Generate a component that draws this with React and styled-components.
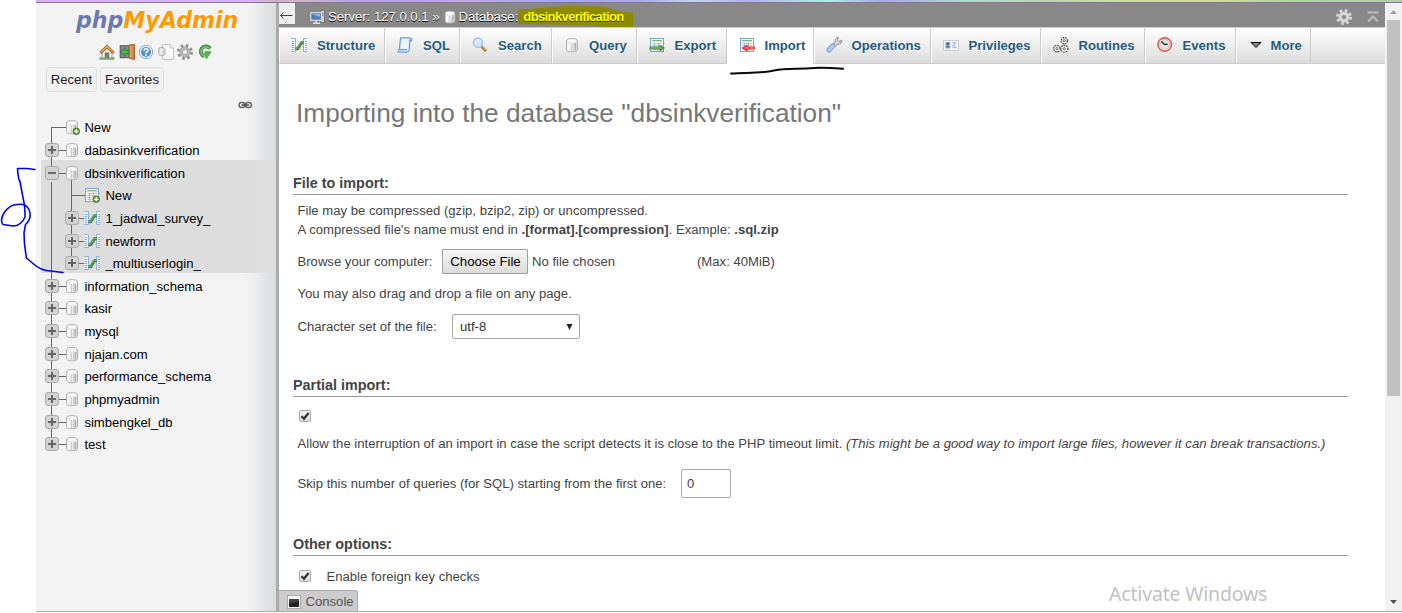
import React from "react";
import styled, { createGlobalStyle, css } from "styled-components";

const GlobalStyle = createGlobalStyle`
  * { box-sizing: border-box; }
  body { margin: 0; background: #fff; overflow: hidden; }
  body, button, input { font-family: "Liberation Sans", Arial, sans-serif; }
`;

/* ---------- icons: each one is drawn on a 16 x 16 grid ---------- */

const Db = () => (
  <g>
    <path d="M2.5 4 Q2.5 1.5 8 1.5 Q13.500 1.5 13.5 4 V12.5 Q13.5 14.8 8 14.8 Q2.5 14.8 2.5 12.5Z" fill="#ececec" stroke="#b2b2b2" />
    <path d="M4.5 6.5V13.2" stroke="#fff" strokeWidth="2" />
    <path d="M7.5 6.5V14M9.5 6.5V14" stroke="#cfcfcf" />
    <path d="M11.4 6V13.5" stroke="#b0b0b0" strokeWidth="1.8" />
    <ellipse cx="8" cy="4" rx="4.8" ry="2" fill="#fcfcfc" stroke="#d4d4d4" strokeWidth=".6" />
  </g>
);
const Plus = () => (
  <g>
    <circle cx="12.3" cy="12.3" r="3.2" fill="#73a846" stroke="#447821" />
    <path d="M12.3 10.3V14.3M10.3 12.3H14.3" stroke="#fff" strokeWidth="1.2" />
  </g>
);
const DbNew = () => (<g><Db /><Plus /></g>);
const Sheet = () => (
  <g>
    <rect x="1.5" y="1.5" width="13" height="13" fill="#fff" stroke="#7d9fd3" />
    <path d="M3 3.7H13" stroke="#83b777" strokeWidth="1.4" />
    <path d="M3 6.5H13M3 8.5H13M3 10.5H13M3 12.5H13" stroke="#b4c9e8" />
    <path d="M5.5 5.5V13.5M9.5 5.5V13.5" stroke="#8fb0dd" strokeWidth=".8" />
  </g>
);
const TableNew = () => (<g><Sheet /><Plus /></g>);
const Structure = () => (
  <g>
    <path d="M0 1.5H4.5V14.5H0Z" fill="#eef5ff" />
    <path d="M12 1.5H16V14.5H12Z" fill="#eef5ff" />
    <path d="M0 1.5H4.5V14.5H0M16 1.5H12.500V14.5H16" fill="none" stroke="#8fb1e0" />
    <path d="M.5 4.5H3M.5 6.5H3M.5 8.5H3M.5 10.5H3M.5 12.500H3M14 4.5H16M14 6.5H16M14 8.5H16M14 10.5H16M14 12.5H16" stroke="#86a9dc" />
    <path d="M4.5 11.8H6.8L10.4 5.7H12.8" fill="none" stroke="#397e3a" strokeWidth="2.9" strokeLinejoin="round" />
    <path d="M4.5 11.5H6.6L10.2 5.4H12.8" fill="none" stroke="#62a95a" strokeWidth="1.3" strokeLinejoin="round" />
  </g>
);
const Sql = () => (
  <g>
    <path d="M3.5 .8H13.5Q15.500 1 15 4H13L12.3 12.500Q12 15.200 10 15.200H1.500Q.2 13 2.3 12.500Z" fill="#cfe2fa" stroke="#5e8ed0" />
    <path d="M5 2.200H12L11 11.800H4Z" fill="#eaf4ff" />
    <path d="M2 12.7H10M13 1.5V4" stroke="#5e8ed0" />
  </g>
);
const Search = () => (
  <g>
    <path d="M9.500 9.500L13.2 13.2" stroke="#b57a3d" strokeWidth="3" strokeLinecap="round" />
    <path d="M10 9.300L13.5 12.800" stroke="#e0b072" strokeWidth="1" strokeLinecap="round" />
    <circle cx="6" cy="5.7" r="4.6" fill="#d5e7ff" stroke="#a4c0ee" strokeWidth="1.5" />
    <path d="M3.6 5.3Q4 3.300 6 3" stroke="#fff" fill="none" />
  </g>
);
const Export = () => (
  <g>
    <Sheet />
    <path d="M.5 9.5H10.5V7.300L16 11L10.5 14.700V12.500H.5Z" fill="#478b38" />
    <path d="M1.500 11H13.500" stroke="#9dcd88" strokeWidth=".9" />
  </g>
);
const Import = () => (
  <g>
    <Sheet />
    <path d="M16 9.5H8.500V7.2L2.5 11L8.500 14.8V12.500H16Z" fill="#e3322b" />
    <path d="M5.500 11H9.500M11 11H15.500" stroke="#ffb0a8" strokeWidth=".9" />
  </g>
);
const Wrench = () => (
  <g>
    <path d="M3 13L7.200 8.600" stroke="#7a9ede" strokeWidth="5" strokeLinecap="round" />
    <path d="M3 13L7.200 8.600" stroke="#afc9f5" strokeWidth="3" strokeLinecap="round" />
    <path d="M7.500 7L9.3 5Q8.300 1.200 12.5.3L11.5 3.3L13 4.5L15.700 3.2Q16 7.700 11.5 7.200L9.500 9Z" fill="#d9d9d9" stroke="#8b8b8b" />
  </g>
);
const IdCard = () => (
  <g>
    <rect x=".5" y="3.5" width="15" height="10" fill="#f7f9fb" stroke="#c9cdd2" />
    <rect x="2.3" y="5" width="5" height="5.5" fill="#8abaee" />
    <circle cx="4.8" cy="6.8" r="1.4" fill="#7a5330" />
    <path d="M2.3 10.5Q4.8 7.5 7.3 10.5Z" fill="#285687" />
    <path d="M9.5 5.8H13.5M9.5 8H12.5M9.5 10.2H13.5" stroke="#7aa0cc" />
    <path d="M2.3 12H7" stroke="#aebdd0" />
  </g>
);
const Routines = () => (
  <g>
    {[[11.3, 3.7, 2.8], [3.9, 11.6, 2.9], [11.4, 11.7, 3.1]].map(([x, y, r]) => (
      <g key={`${x}-${y}`}>
        <circle cx={x} cy={y} r={r} fill="#fff" stroke="#4c4c42" strokeWidth="2" strokeDasharray="1.500 .75" />
        <circle cx={x} cy={y} r={r - 0.3} fill="#f6f6f0" />
        <circle cx={x} cy={y} r="1.1" fill="#ddd" stroke="#555" strokeWidth=".8" />
      </g>
    ))}
  </g>
);
const Clock = () => (
  <g>
    <circle cx="7.7" cy="7.500" r="6.7" fill="#fff" stroke="#e0605c" strokeWidth="1.7" />
    <circle cx="7.7" cy="7.5" r="4.900" fill="#e4e7e5" stroke="#aaa" strokeWidth=".7" />
    <path d="M4.300 4.5L7.7 7.5L10.7 7.200" fill="none" stroke="#333" strokeWidth="1.6" />
  </g>
);
const Down = () => (<path d="M3 5.5H13L8 10.5Z" fill="#888" stroke="#000" />);
const Home = () => (
  <g>
    <path d="M.5 14.5H15.5" stroke="#68a752" strokeWidth="2.4" />
    <path d="M3 8L8 3.5L13 8V14H3Z" fill="#f2eee5" stroke="#999" />
    <path d="M6.3 14V9H9.7V14" fill="#7e8587" stroke="#555" strokeWidth=".8" />
    <path d="M1.2 9L8 2.6L14.8 9" fill="none" stroke="#a45d22" strokeWidth="3" />
    <path d="M1.5 8.600L8 2.5L14.5 8.600" fill="none" stroke="#e7b068" strokeWidth="1.3" />
  </g>
);
const Exit = () => (
  <g>
    <rect x="1.2" y="1.7" width="10" height="12" fill="#858b8c" stroke="#555" />
    <path d="M10 1L15.5 .5V15.5L10 14Z" fill="#cb8c48" stroke="#985b29" />
    <path d="M11.8 2.5V13.5" stroke="#e9b777" />
    <path d="M10 6.3H6V3.8L1 8L6 12.2V9.7H10Z" fill="#55b25b" stroke="#28752f" strokeWidth=".8" />
  </g>
);
const Help = () => (
  <g>
    <circle cx="8" cy="8" r="6.7" fill="#f1f7ff" stroke="#7da4d7" />
    <circle cx="8" cy="8" r="5" fill="#5b8dcc" />
    <path d="M6 6.7Q6 4.7 8 4.7T10 6.5Q10 7.5 8 8.5V9.5M8 10.6V12" stroke="#fff" strokeWidth="1.5" fill="none" />
  </g>
);
const Docs = () => (
  <g>
    <path d="M4.5.5H12L15.5 4V15.5H4.5Z" fill="#fbfbfb" stroke="#c4c4c4" />
    <path d="M12 .5V4H15.5" fill="#eee" stroke="#c4c4c4" />
    <rect x=".7" y="3.6" width="6.3" height="7.8" rx="1.800" fill="#e6e6e6" stroke="#aaa" />
    <path d="M3 6V10" stroke="#fff" />
    <path d="M5 6V10" stroke="#bbb" />
  </g>
);
const Gear = ({ fill = "#bbb", hole = "#f3f3f3", edge = "#939393" }) => (
  <g>
    <circle cx="8" cy="8" r="6.5" fill="none" stroke={edge} strokeWidth="3" strokeDasharray="2.55 2.555" />
    <circle cx="8" cy="8" r="5.2" fill={fill} stroke={edge} strokeWidth=".7" />
    <circle cx="8" cy="8" r="2.500" fill={hole} stroke={edge} strokeWidth=".8" />
  </g>
);
const HeaderGear = () => <Gear fill="#d6d6d6" edge="#d6d6d6" hole="#888" />;
const Reload = () => (
  <g>
    <path d="M13 4.700A5 5 0 1 0 7.500 12.200" fill="none" stroke="#3d8f3f" strokeWidth="3.800" />
    <path d="M12.500 4.500A4.800 4.800 0 1 0 7.500 12.200" fill="none" stroke="#79c46e" strokeWidth="1.700" />
    <path d="M7.800 7.800H14L9.300 14.800Z" fill="#62b058" stroke="#3d8f3f" strokeWidth=".8" />
  </g>
);
const Server = () => (
  <g>
    <path d="M10.5 1.5H14.5V13.5H10.5Z" fill="#ccc" stroke="#777" />
    <path d="M11.5 4.5H13.5M11.5 6.5H13.5" stroke="#777" />
    <rect x=".8" y="3.7" width="10.7" height="7.6" fill="#4c7bb8" stroke="#ddd" strokeWidth="1.2" />
    <path d="M2 5H10V8Z" fill="#8db4e4" />
    <path d="M6 12V13.5M3 14.3H10" stroke="#ddd" strokeWidth="1.5" />
  </g>
);
const ToTop = () => (<path d="M2.5 3.5H13.5M3 12.500L8 7.500L13 12.500" fill="none" stroke="#bbb" strokeWidth="2" />);
const Chain = () => (
  <g fill="none" stroke="#666" strokeWidth="1.400">
    <rect x="2" y="5.500" width="6" height="5" rx="2.5" />
    <rect x="8.400" y="5.500" width="6" height="5" rx="2.5" />
    <path d="M4.5 8H12" stroke="#444" />
  </g>
);
const Terminal = () => (
  <g>
    <rect x="1.5" y="1.5" width="13" height="13" fill="#fff" stroke="#aaa" />
    <rect x="3" y="5" width="10" height="8" fill="#222" />
    <path d="M3 5H13V7L3 10Z" fill="#444" />
  </g>
);

const Glyph = styled.svg`
  display: block;
  flex: none;
  width: ${(p) => p.$size || 16}px;
  height: ${(p) => p.$size || 16}px;
`;
const Icon = ({ of: Shape, size }) => (
  <Glyph viewBox="0 0 16 16" $size={size} aria-hidden="true"><Shape /></Glyph>
);

/* ---------- page frame ---------- */

const Screen = styled.div`
  position: relative;
  width: 1402px;
  height: 613px;
  padding-left: 36px;
  overflow: hidden;
  background: #fff;
  font-size: 13.12px;
  line-height: 15px;
  white-space: nowrap;
`;
const Wallpaper = styled.div`
  height: 3px;
  border-bottom: 1px solid #85788f;
  background: linear-gradient(90deg, #d9b0ff 0 16%, #cdb4c6 17% 20%, #b7a0f0 23% 28%, #c0a8e6 31%, #a3a8f2 37% 44%, #bcd8ec 48%, #aeb0f4 52%, #aaf0dc 58%, #a8a6ef 62%, #a9dfc5 68%, #b7d6b0 74%, #c6e2a4 79%, #d5dd9c 86%, #a6d6a0 92%, #b0d0a5);
`;
const Workspace = styled.div`
  display: flex;
  height: 608px;
`;
const BottomEdge = styled.div`
  height: 1px;
  background: #aaa;
`;

/* ---------- navigation ---------- */

const Sidebar = styled.nav`
  flex: none;
  width: 243px;
  border-right: 3px solid #aaa;
  background: linear-gradient(90deg, #f3f3f3 0 208px, #eceded 220px, #d9dcde 240px);
`;
const Logo = styled.div`
  height: 38px;
  padding: 4px 0 0 40px;
  font: italic bold 22.1px/26px "DejaVu Sans", sans-serif;
  color: #f90;
  text-shadow: 0 0 1px #fff;
`;
const LogoPhp = styled.span`
  color: #6c78af;
`;
const Shortcuts = styled.div`
  display: flex;
  gap: 3.6px;
  padding: 3px 0 0 63px;
  height: 23px;
`;
const QuickLinks = styled.div`
  display: flex;
  gap: 3px;
  padding: 3px 0 0 10px;
  height: 30px;
`;
const QuickButton = styled.button`
  width: ${(p) => p.$width}px;
  height: 25px;
  padding: 0;
  border: 1px solid #ddd;
  border-radius: 4px;
  background: #f2f2f2;
  color: #222;
  font-size: 13.12px;
`;
const LinkRow = styled.div`
  display: flex;
  justify-content: flex-end;
  height: 20px;
  padding: 3px 23px 0 0;
`;
const Tree = styled.div`
  padding-left: 5px;
`;
const TreeRow = styled.div`
  display: flex;
  height: ${(p) => p.$height}px;
  width: 232px;
  color: #000;
  background: ${(p) => (p.$selected ? "linear-gradient(90deg, #ddd 220px, #dddddd66 232px)" : "none")};
`;
const Branch = styled.svg`
  flex: none;
  display: block;
  width: ${(p) => (p.$nested ? 64.4 : 43.4)}px;
  height: 100%;
`;
const TreeName = styled.span`
  padding-top: 6px;
`;

const rows = [
  { name: "New", h: 23, icon: DbNew, first: true },
  { name: "dabasinkverification", h: 23, icon: Db, box: "+" },
  { name: "dbsinkverification", h: 22, icon: Db, box: "-", selected: true },
  { name: "New", h: 23, icon: TableNew, nested: true, selected: true },
  { name: "1_jadwal_survey_", h: 23, icon: Structure, box: "+", nested: true, selected: true },
  { name: "newform", h: 22, icon: Structure, box: "+", nested: true, selected: true },
  { name: "_multiuserlogin_", h: 23, icon: Structure, box: "+", nested: true, last: true, selected: true },
  { name: "information_schema", h: 22, icon: Db, box: "+" },
  { name: "kasir", h: 23, icon: Db, box: "+" },
  { name: "mysql", h: 23, icon: Db, box: "+" },
  { name: "njajan.com", h: 22, icon: Db, box: "+" },
  { name: "performance_schema", h: 23, icon: Db, box: "+" },
  { name: "phpmyadmin", h: 23, icon: Db, box: "+" },
  { name: "simbengkel_db", h: 22, icon: Db, box: "+" },
  { name: "test", h: 22, icon: Db, box: "+", last: true },
];

function TreeItem({ row }) {
  const { nested, first, last, h, box, icon: Shape } = row;
  const axis = nested ? 30.5 : 10.5;
  const end = last ? 13 : h;
  return (
    <TreeRow $height={h} $selected={row.selected}>
      <Branch $nested={nested} aria-hidden="true">
        <g stroke="#666" fill="none">
          {nested && <path d={`M10.5 0V${h}`} />}
          {box === "-"
            ? <path d={`M10.5 0V13M30.5 19V${h}`} />
            : <path d={`M${axis} ${first ? 13 : 0}V${end}`} />}
          <path d={`M${axis} 13.5h14.5`} />
        </g>
        {box && (
          <g transform={`translate(${nested ? 20 : 0} 0)`}>
            <rect x="4.5" y="6.5" width="13" height="13" rx="2.5" fill="#d2d2d2" stroke="#aaa" />
            <path d={box === "+" ? "M7 13H15M11 9V17" : "M7 13H15"} stroke="#666" strokeWidth="2" />
          </g>
        )}
        <g transform={`translate(${nested ? 43 : 23} 5)`}><Shape /></g>
      </Branch>
      <TreeName>{row.name}</TreeName>
    </TreeRow>
  );
}

/* ---------- main panel ---------- */

const Panel = styled.div`
  flex: none;
  display: flex;
  flex-direction: column;
  width: 1106px;
  height: 608px;
`;
const Crumbs = styled.header`
  display: flex;
  align-items: center;
  flex: none;
  height: 24px;
  padding-right: 4px;
  background: #888;
  color: #fff;
  text-shadow: 0 1px 0 #000;
`;
const Collapse = styled.button`
  align-self: flex-start;
  width: 16px;
  height: 21px;
  margin-right: 15px;
  padding: 0;
  border: 0;
  background: #eee;
  svg { display: block; }
`;
const CrumbText = styled.span`
  margin: 3px 3px 0 2px;
`;
const CrumbIcon = styled.span`
  margin-top: 4px;
`;
const Marked = styled.span`
  position: relative;
  flex: none;
  width: 115px;
  height: 21px;
  margin: 3px 0 0 -3px;
  padding: 3px 0 0 5px;
  color: #ff0;
  font-weight: bold;
  letter-spacing: -0.66px;
  clip-path: polygon(0 18%, 42% 0, 76% 3%, 88% 26%, 100% 32%, 100% 100%, 74% 100%, 60% 92%, 0 86%);
  background: #8c8b00;
  text-shadow: 0 1px 0 #333200;
`;
const Tools = styled.div`
  display: flex;
  align-items: center;
  gap: 13px;
  margin: 4px 0 0 auto;
`;
const TabBar = styled.div`
  display: flex;
  flex: none;
  height: 37px;
  border-top: 1px solid #ccc;
  border-bottom: 1px solid #ccc;
  background: linear-gradient(#fff, #dcdcdc);
`;
const Tab = styled.a`
  display: flex;
  align-items: center;
  gap: ${(p) => p.$gap}px;
  width: ${(p) => p.$width}px;
  padding: 0 0 1px 10.5px;
  border-left: 1px solid #fff;
  border-right: 1px solid #ccc;
  color: #235a81;
  font-weight: bold;
  text-shadow: 0 1px 0 #fff;
  ${(p) => p.$active && css`
    background: #fff;
    margin-bottom: -1px;
    padding-bottom: 2px;
  `}
`;
const Form = styled.form`
  flex: 1;
  min-height: 0;
  padding: 0 37px 0 14px;
  color: #444;
`;
const Title = styled.h2`
  margin: 0 0 11px 3px;
  font: 26.24px/98px "Liberation Sans", Arial, sans-serif;
  color: #777;
`;
const Legend = styled.h3`
  height: 22px;
  margin: ${(p) => p.$top || 0}px 0 0;
  border-bottom: 1px solid #999;
  color: #444;
  font: bold 14.38px/20px "Liberation Sans", Arial, sans-serif;
`;
const Line = styled.div`
  display: flex;
  align-items: center;
  height: ${(p) => p.$height}px;
  margin-top: ${(p) => p.$top || 0}px;
  padding-left: 4.5px;
`;
const Prose = styled.p`
  margin: 0;
`;
const Aside = styled.i`
  letter-spacing: 0.01px;
`;
const FieldLabel = styled.label`
  width: ${(p) => p.$width}px;
`;
const FileButton = styled.button`
  width: 86px;
  height: 25px;
  padding: 0 0 0 1px;
  border: 1px solid #a0a0a0;
  border-radius: 1px;
  background: linear-gradient(#f6f6f6, #dcdcdc);
  color: #000;
  font-size: 13.2px;
`;
const FileState = styled.span`
  width: 169px;
  padding-left: 4px;
`;
const Select = styled.div`
  display: flex;
  align-items: center;
  justify-content: space-between;
  width: 128px;
  height: 25px;
  padding: 0 6px 0 7px;
  border: 1px solid #aaa;
  border-radius: 2px;
  background: #fff;
  color: #333;
`;
const Check = styled.span`
  display: grid;
  place-items: center;
  width: 12px;
  height: 12px;
  margin: 0 15.5px 0 1.5px;
  border: 1px solid #aaa;
  border-radius: 2px;
  background: linear-gradient(#eee, #ddd);
`;
const NumberBox = styled.input`
  width: 50px;
  height: 29px;
  padding: 0 5px;
  border: 1px solid #aaa;
  border-radius: 2px;
  color: #444;
  font-size: 13.12px;
`;
const ConsoleBar = styled.div`
  display: flex;
  align-items: center;
  gap: 3.5px;
  flex: none;
  width: 79px;
  height: 21px;
  padding: 1px 0 0 7px;
  border: solid #aaa;
  border-width: 1px 1px 0 0;
  border-top-right-radius: 3px;
  background: #ccc;
  color: #555;
`;

const Checked = ({ label }) => (
  <Check role="checkbox" aria-checked="true" aria-label={label}>
    <svg width="10" height="10" viewBox="0 0 10 10">
      <path d="M1.5 5.3L4 7.8L8.5 2" fill="none" stroke="#333" strokeWidth="2.3" />
    </svg>
  </Check>
);

/* ---------- scrollbar and overlays ---------- */

const Scrollbar = styled.div`
  display: flex;
  flex-direction: column;
  align-items: center;
  width: 17px;
  background: #f1f1f1;
`;
const ScrollThumb = styled.div`
  width: 13px;
  height: 376px;
  margin-bottom: auto;
  background: #c1c1c1;
`;
const Arrow = styled.svg`
  display: block;
  width: 17px;
  height: 17px;
`;
const Ink = styled.svg`
  position: absolute;
  left: ${(p) => p.$left}px;
  top: ${(p) => p.$top}px;
  width: ${(p) => p.$width}px;
  height: ${(p) => p.$height}px;
  pointer-events: none;
`;
const Watermark = styled.div`
  position: absolute;
  left: 1109px;
  top: 582px;
  color: #c1c1c1;
  font: 19.5px/24px "Noto Sans", "Open Sans", sans-serif;
  letter-spacing: -0.18px;
`;

const tabs = [
  ["Structure", Structure, 106],
  ["SQL", Sql, 75],
  ["Search", Search, 92],
  ["Query", Db, 85, 9.5],
  ["Export", Export, 90, 10],
  ["Import", Import, 87, 10],
  ["Operations", Wrench, 117, 10],
  ["Privileges", IdCard, 110, 10],
  ["Routines", Routines, 104, 10],
  ["Events", Clock, 91, 10],
  ["More", Down, 75, 7],
];

export default function App() {
  return (
    <Screen>
      <GlobalStyle />
      <Wallpaper />
      <Workspace>
        <Sidebar>
          <Logo><LogoPhp>php</LogoPhp>MyAdmin</Logo>
          <Shortcuts>
            {[Home, Exit, Help, Docs, Gear, Reload].map((shape, i) => <Icon key={i} of={shape} />)}
          </Shortcuts>
          <QuickLinks>
            <QuickButton $width={51}>Recent</QuickButton>
            <QuickButton $width={64}>Favorites</QuickButton>
          </QuickLinks>
          <LinkRow><Icon of={Chain} /></LinkRow>
          <Tree>
            {rows.map((row, i) => <TreeItem key={i} row={row} />)}
          </Tree>
        </Sidebar>
        <Panel>
          <Crumbs>
            <Collapse aria-label="Hide panel">
              <svg width="16" height="21"><path d="M1.5 12.5H13.5M4.5 9.5L1.5 12.5L4.5 15.5" fill="none" stroke="#444" /></svg>
            </Collapse>
            <CrumbIcon><Icon of={Server} /></CrumbIcon>
            <CrumbText>Server: 127.0.0.1 »</CrumbText>
            <CrumbIcon><Icon of={Db} size={14} /></CrumbIcon>
            <CrumbText>Database:</CrumbText>
            <Marked>dbsinkverification</Marked>
            <Tools><Icon of={HeaderGear} size={16} /><Icon of={ToTop} /></Tools>
          </Crumbs>
          <TabBar>
            {tabs.map(([name, shape, width, gap = 10.5]) => (
              <Tab key={name} $width={width} $gap={gap} $active={name === "Import"}>
                <Icon of={shape} />{name}
              </Tab>
            ))}
          </TabBar>
          <Form>
            <Title>Importing into the database "dbsinkverification"</Title>
            <Legend>File to import:</Legend>
            <Line $height={19} $top={6}><Prose>File may be compressed (gzip, bzip2, zip) or uncompressed.</Prose></Line>
            <Line $height={19}>
              <Prose>A compressed file's name must end in <b>.[format].[compression]</b>. Example: <b>.sql.zip</b></Prose>
            </Line>
            <Line $height={33} $top={6}>
              <FieldLabel $width={144.5}>Browse your computer:</FieldLabel>
              <FileButton type="button">Choose File</FileButton>
              <FileState>No file chosen</FileState>
              <span>(Max: 40MiB)</span>
            </Line>
            <Line $height={18} $top={6}><Prose>You may also drag and drop a file on any page.</Prose></Line>
            <Line $height={35} $top={7}>
              <FieldLabel $width={154.5}>Character set of the file:</FieldLabel>
              <Select>
                utf-8
                <svg width="7" height="8"><path d="M.5 1H6.500L3.500 7Z" fill="#222" /></svg>
              </Select>
            </Line>
            <Legend $top={31}>Partial import:</Legend>
            <Line $height={24} $top={7}><Checked label="Allow interruption" /></Line>
            <Line $height={19} $top={6}>
              <Prose>
                Allow the interruption of an import in case the script detects it is close to the PHP timeout limit.{" "}
                <Aside>(This might be a good way to import large files, however it can break transactions.)</Aside>
              </Prose>
            </Line>
            <Line $height={29} $top={16}>
              <FieldLabel $width={383.5}>Skip this number of queries (for SQL) starting from the first one:</FieldLabel>
              <NumberBox defaultValue="0" />
            </Line>
            <Legend $top={36}>Other options:</Legend>
            <Line $height={20} $top={10}><Checked label="Foreign keys" />Enable foreign key checks</Line>
          </Form>
          <ConsoleBar><Icon of={Terminal} />Console</ConsoleBar>
        </Panel>
        <Scrollbar>
          <Arrow><path d="M5 11L8.5 7L12 11Z" fill="#a0a0a0" /></Arrow>
          <ScrollThumb />
          <Arrow><path d="M5 6H12L8.5 10Z" fill="#505050" /></Arrow>
        </Scrollbar>
      </Workspace>
      <BottomEdge />
      <Ink $left={0} $top={160} $width={70} $height={120}>
        <path d="M35 9.5L27 8.5L17.5 8.500Q17.500 13 19 20L20 21.500L22.500 35Q25.500 47 25 57Q21 66 13 66L3 64.500Q-.500 61 4 53Q10 44 18 44.500Q28 43 30 53Q31 60 25.500 64.500L24 73Q24 85 26.500 98L33 103.500Q41 111 51 111L63 112.500" transform="translate(0 -9.500) translate(0 9.500)" fill="none" stroke="#0000f5" strokeWidth="1.600" strokeLinejoin="round" strokeLinecap="round" />
      </Ink>
      <Ink $left={728} $top={64} $width={120} $height={14}>
        <path d="M3 9.500C20 8.500 33 9.500 46 6.500S70 5.500 86 4Q98 3.500 115 4.800" fill="none" stroke="#0a0a0a" strokeWidth="2" strokeLinecap="round" />
      </Ink>
      <Watermark>Activate Windows</Watermark>
    </Screen>
  );
}
